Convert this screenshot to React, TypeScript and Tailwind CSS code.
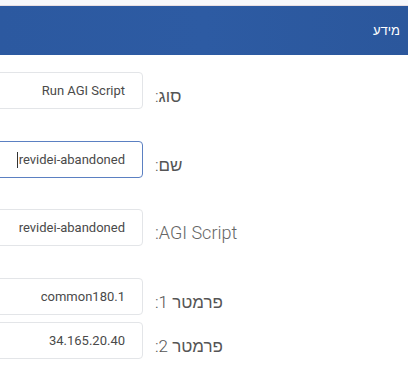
import React from 'react'

interface Field {
  label: string
  value: string
  focused?: boolean
  hebrew?: boolean
}

const fields: Field[] = [
  { label: 'סוג:', value: 'Run AGI Script', hebrew: true },
  { label: 'שם:', value: 'revidei-abandoned', focused: true, hebrew: true },
  { label: 'AGI Script:', value: 'revidei-abandoned' },
  { label: 'פרמטר 1:', value: 'common180.1', hebrew: true },
  { label: 'פרמטר 2:', value: '34.165.20.40', hebrew: true },
]

function FormRow({ field, className }: { field: Field; className?: string }) {
  return (
    <div className={`flex items-start gap-[12px] ${className ?? ''}`}>
      <label
        className={`w-[253px] shrink-0 pt-[12px] text-left font-light leading-[24px] ${
          field.hebrew ? 'text-[17px] text-[#555]' : 'text-[18px] text-[#666]'
        }`}
      >
        {field.label}
      </label>
      <div
        className={`relative flex h-[37px] w-[220px] shrink-0 items-center rounded-[4px] border bg-white pr-[17px] text-[13px] text-[#4a4a4a] ${
          field.focused ? 'border-[#5b80c2]' : 'border-[#e3e5e8]'
        }`}
      >
        <span dir="ltr" className="flex items-center">
          {field.focused && <span className="mr-[1px] inline-block h-[16px] w-[1px] bg-[#333]" />}
          {field.value}
        </span>
      </div>
    </div>
  )
}

export default function App() {
  return (
    <div
      dir="rtl"
      className="h-[365px] w-[408px] overflow-hidden bg-white"
      style={{ fontFamily: 'Roboto, "Liberation Sans", sans-serif' }}
    >
      <div className="h-[6px] border-b border-[#e8dfe3] bg-[#f7f8fb]" />
      <div className="flex h-[49px] items-center bg-gradient-to-l from-[#2b579c] via-[#2d5ba3] to-[#2c59a0] pr-[8px] text-[13px] text-white">
        מידע
      </div>
      <div className="pt-[17px]">
        <FormRow field={fields[0]} />
        <FormRow field={fields[1]} className="mt-[32px]" />
        <FormRow field={fields[2]} className="mt-[31px]" />
        <FormRow field={fields[3]} className="mt-[32px]" />
        <FormRow field={fields[4]} className="mt-[7px]" />
      </div>
    </div>
  )
}
